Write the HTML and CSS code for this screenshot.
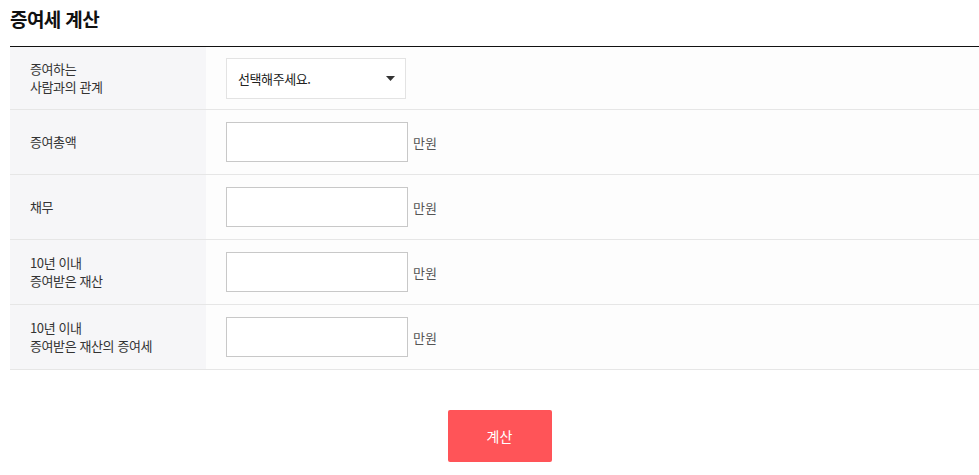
FILE: index.html
```html
<!DOCTYPE html>
<html lang="ko">
<head>
<meta charset="utf-8">
<link rel="stylesheet" href="styles.css">
</head>
<body>
<div class="calc">
  <h2 class="title">증여세 계산</h2>
  <div class="form">
    <div class="row first">
      <div class="label">증여하는<br>사람과의 관계</div>
      <div class="field">
        <div class="select">
          <span>선택해주세요.</span>
          <svg width="9" height="5" viewBox="0 0 9 5"><path d="M0 0H9L4.5 5Z" fill="#333"/></svg>
        </div>
      </div>
    </div>
    <div class="row">
      <div class="label">증여총액</div>
      <div class="field"><div class="input"></div><span class="unit">만원</span></div>
    </div>
    <div class="row">
      <div class="label">채무</div>
      <div class="field"><div class="input"></div><span class="unit">만원</span></div>
    </div>
    <div class="row">
      <div class="label">10년 이내<br>증여받은 재산</div>
      <div class="field"><div class="input"></div><span class="unit">만원</span></div>
    </div>
    <div class="row">
      <div class="label">10년 이내<br>증여받은 재산의 증여세</div>
      <div class="field"><div class="input"></div><span class="unit">만원</span></div>
    </div>
  </div>
  <div class="actions"><button class="btn">계산</button></div>
</div>
</body>
</html>
```
FILE: styles.css
```css
* { box-sizing: border-box; }
body {
  margin: 0;
  background: #fff;
  font-family: "Noto Sans CJK KR", "Noto Sans", sans-serif;
  color: #333;
}
.calc { padding-left: 10px; }
.title {
  margin: 0;
  height: 47px;
  padding-top: 6px;
  font-size: 19px;
  font-weight: 700;
  color: #111;
  line-height: 26px;
  letter-spacing: -0.6px;
  border-bottom: 1px solid #111;
}
.row {
  display: flex;
  height: 65px;
  border-bottom: 1px solid #e6e6e6;
  background: #fdfdfd;
}
.row.first { height: 63px; }
.label {
  width: 196px;
  background: #f6f6f8;
  padding-left: 20px;
  display: flex;
  flex-direction: column;
  justify-content: center;
  font-size: 13px;
  line-height: 18px;
  letter-spacing: -0.4px;
  color: #333;
}
.field {
  display: flex;
  align-items: center;
  padding-left: 20px;
}
.select {
  width: 180px;
  height: 41px;
  border: 1px solid #e3e3e3;
  background: #fff;
  display: flex;
  align-items: center;
  justify-content: space-between;
  padding: 0 10px 0 11px;
  font-size: 13px;
  letter-spacing: -0.4px;
  color: #222;
}
.input {
  width: 182px;
  height: 40px;
  border: 1px solid #c8c8c8;
  background: #fff;
}
.unit {
  margin-left: 5px;
  font-size: 13px;
  color: #555;
}
.actions {
  display: flex;
  justify-content: center;
  padding-top: 40px;
  padding-left: 10px;
}
.btn {
  width: 104px;
  height: 52px;
  border: 0;
  border-radius: 2px;
  background: #ff5458;
  color: #fff;
  font-family: inherit;
  font-size: 14px;
}
```
